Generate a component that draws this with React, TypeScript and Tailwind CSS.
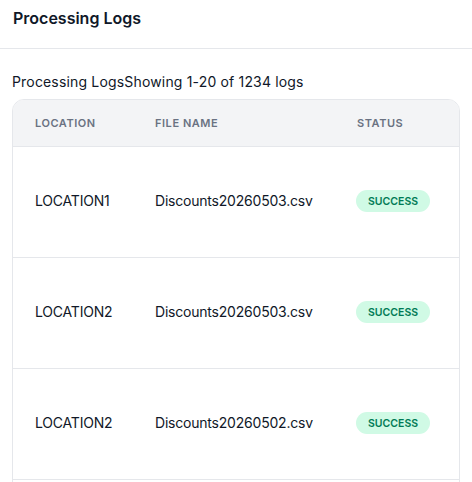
const logs = [
  { location: 'LOCATION1', file: 'Discounts20260503.csv', status: 'SUCCESS' },
  { location: 'LOCATION2', file: 'Discounts20260503.csv', status: 'SUCCESS' },
  { location: 'LOCATION2', file: 'Discounts20260502.csv', status: 'SUCCESS' },
];

export default function App() {
  return (
    <div className="h-[482px] overflow-hidden bg-white text-gray-900 font-['Inter',sans-serif]">
      <div className="h-[49px] flex items-center px-[13px] border-b border-gray-200">
        <h1 className="text-base font-semibold -mt-[12px]">Processing Logs</h1>
      </div>

      <div className="px-3 pt-[23px]">
        <p className="text-sm tracking-[0.012em] mb-[7px]">Processing LogsShowing 1-20 of 1234 logs</p>

        <div className="border border-gray-200 rounded-xl overflow-hidden">
          <table className="w-full text-left">
            <thead className="bg-gray-100">
              <tr className="h-[46px]">
                <th className="pl-[22px] w-[120px] text-[11px] font-semibold uppercase tracking-wider text-gray-500">
                  Location
                </th>
                <th className="pl-[22px] w-[201px] text-[11px] font-semibold uppercase tracking-wider text-gray-500">
                  File Name
                </th>
                <th className="pl-[23px] text-[11px] font-semibold uppercase tracking-wider text-gray-500">
                  Status
                </th>
              </tr>
            </thead>
            <tbody>
              {logs.map((log, i) => (
                <tr key={i} className="h-[111px] border-t border-gray-200">
                  <td className="pl-[22px] pb-[2px] text-sm tracking-[-0.015em]">{log.location}</td>
                  <td className="pl-[22px] pb-[2px] text-sm tracking-[-0.015em]">{log.file}</td>
                  <td className="pl-[22px] pb-[4px]">
                    <span className="inline-flex items-center h-[22px] px-3 rounded-full bg-emerald-100 text-emerald-700 text-[10.5px] font-semibold">
                      {log.status}
                    </span>
                  </td>
                </tr>
              ))}
              <tr className="h-[40px] border-t border-gray-200">
                <td colSpan={3} />
              </tr>
            </tbody>
          </table>
        </div>
      </div>
    </div>
  );
}
